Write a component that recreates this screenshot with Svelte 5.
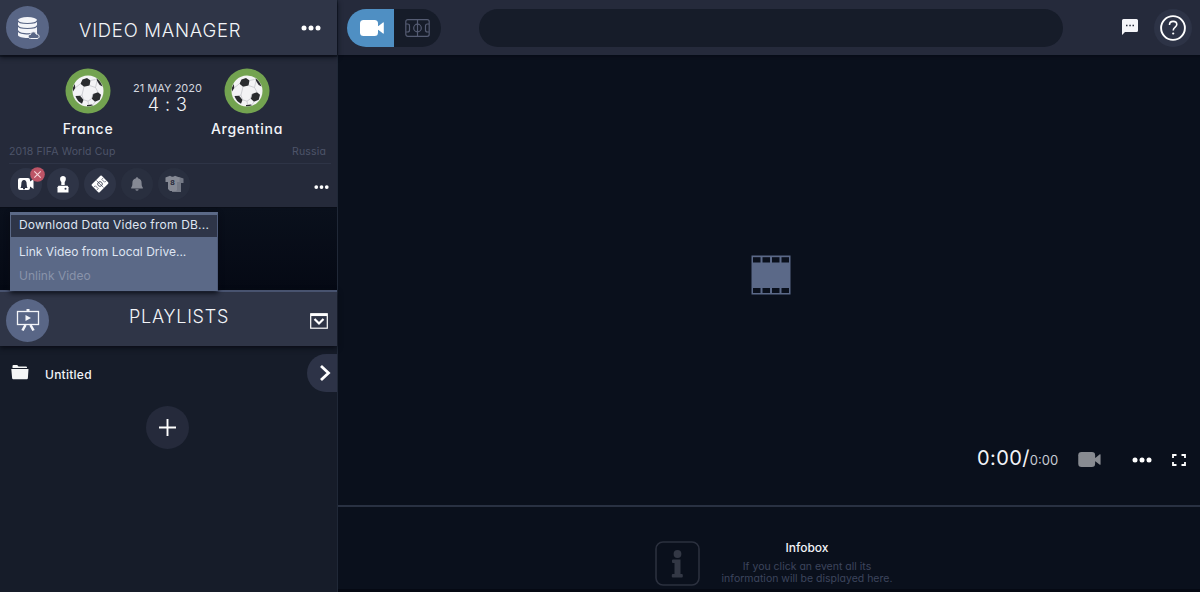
<script lang="ts">
    let mode = $state("video");
    let menuOpen = $state(true);

    const teams = ["France", "Argentina"];
    const menuItems = [
        { label: "Download Data Video from DB...", state: "active" },
        { label: "Link Video from Local Drive...", state: "" },
        { label: "Unlink Video", state: "disabled" },
    ];
</script>

{#snippet dots()}
    <svg class="dots" width="20" height="6" viewBox="0 0 20 6" fill="currentColor">
        <circle cx="3" cy="3" r="2.5" />
        <circle cx="10" cy="3" r="2.5" />
        <circle cx="17" cy="3" r="2.5" />
    </svg>
{/snippet}

{#snippet camera(w: number, h: number)}
    <svg width={w} height={h} viewBox="0 0 24 16" fill="currentColor">
        <rect width="18" height="16" rx="3.5" />
        <path d="M17 6.500l1.500-.5L23 2.500q.8-.5.8.5v10q0 1-.8.5L18.500 10 17 9.500z" />
    </svg>
{/snippet}

{#snippet ball()}
    <svg class="ball" width="46" height="46" viewBox="0 0 46 46">
        <circle cx="23" cy="23" r="22.500" fill="#73a350" />
        <circle cx="23" cy="23" r="15.500" fill="#f3f3f5" />
        <g fill="#2a2c2f">
            <path d="M17.500 11.500l4.500-1.500 3.500 2.500-1 5-5.500 1.200-3.500-3z" />
            <path d="M28 26l5-1.800 3 2.500-1.300 5-4.700 2-3.200-3z" />
            <path d="M10.500 28l4.500-.3 3.500 4-1.500 4q-5-2.500-6.500-7.700z" />
            <path d="M31.500 10.200q4.500 3.300 6 8.300l-2.800-1.500-2.700-4z" />
            <path d="M7.800 20l2-4 .5 4-2.300 3.500z" />
            <path d="M22 37l5-.4 1 .7q-3.500 1.400-6 .9z" />
        </g>
        <path
            d="M19 18.700L17 27l1.500 4.700M17 27l-2 .7M24.500 17.500l6 2 2.500 4.700M30.500 19.500l1.500-6.500M18.500 31.700l4.500 1.500 3.500-2.500 1.500-4.700M15.500 15.700L10 20M25.500 12.500l5-1M23 33.200l.5 3.500M30 33.700l-2 3"
            fill="none"
            stroke="#bfc0c5"
            stroke-width=".7"
        />
    </svg>
{/snippet}

<div class="app">
    <aside>
        <header class="bar">
            <div class="badge">
                <svg width="24" height="24" viewBox="0 0 24 24">
                    <path d="M2 4v15c0 4 19 4 19 0V4z" fill="#f4f5f9" />
                    <ellipse cx="11.500" cy="4" rx="9.500" ry="3" fill="#f4f5f9" />
                    <path d="M2 4.500c0 4 19 4 19 0M2 9.500c0 4 19 4 19 0M2 14.500c0 3.500 12 4 15 2.500" fill="none" stroke="#596686" stroke-width="1.200" />
                    <path d="M14.500 22.500c-3 0-3-4 0-4 1-4 5.500-3 5.500-.5 4 0 4 4.500 1 4.500z" fill="#596686" stroke="#f4f5f9" stroke-width="1" />
                </svg>
            </div>
            <h1>VIDEO MANAGER</h1>
            <button aria-label="More">{@render dots()}</button>
        </header>

        <section class="match">
            <div class="score">
                <div class="team">
                    {@render ball()}
                    <span class="name">{teams[0]}</span>
                </div>
                <div class="result">
                    <span class="date">21 MAY 2020</span>
                    <span class="goals">4 : 3</span>
                </div>
                <div class="team">
                    {@render ball()}
                    <span class="name">{teams[1]}</span>
                </div>
            </div>
            <div class="place">
                <span>2018 FIFA World Cup</span>
                <span>Russia</span>
            </div>
            <div class="tools">
                <button class="tool" aria-label="Video" onclick={() => (menuOpen = !menuOpen)}>
                    <svg width="18" height="14" viewBox="0 0 18 14">
                        <path d="M3 1h8q2 0 2 2v1.500l3.500-2.300V12L13 9.500V11q0 2-2 2H3q-2 0-2-2V3q0-2 2-2z" fill="#fff" />
                        <path d="M3.300 11q1-1 1-3.500 0-4.500 2.700-4.500T9.700 7.500q0 2.500 1 3.500zM6 11h2v1.200H6z" fill="#2d3345" />
                    </svg>
                    <svg class="cross" width="15" height="15" viewBox="0 0 15 15">
                        <circle cx="7.500" cy="7.500" r="7.300" fill="#bd5466" />
                        <path d="M4.300 4.300l6.400 6.400M10.700 4.300l-6.400 6.400" stroke="#f6d6da" stroke-width="1.100" />
                    </svg>
                </button>
                <button class="tool" aria-label="Speaker">
                    <svg width="12" height="17" viewBox="0 0 12 17" fill="#fff">
                        <path d="M6 0c3.500 0 3.500 4 1.700 6v3h-3.400V6C2.500 4 2.500 0 6 0z" />
                        <path d="M1.500 9.700h9l1 1.500v5.300H.5v-5.300z" />
                        <circle cx="8.500" cy="12.800" r="1" fill="#30364a" />
                    </svg>
                </button>
                <button class="tool" aria-label="Pitch">
                    <svg width="18" height="18" viewBox="0 0 18 18">
                        <g transform="rotate(-45 9 9)">
                            <rect x="2" y="3.500" width="14" height="11" rx="1" fill="#fff" />
                            <path d="M9 4v10M2.500 7h2v4h-2M15.500 7h-2v4h2" fill="none" stroke="#30364a" stroke-width=".6" />
                            <circle cx="9" cy="9" r="2.300" fill="none" stroke="#30364a" stroke-width=".8" />
                        </g>
                    </svg>
                </button>
                <button class="tool off" aria-label="Alerts">
                    <svg width="12" height="14" viewBox="0 0 12 14" fill="#858994">
                        <path d="M6 .3c.8 0 1 .5 1 1 2.800.5 3.600 2.500 3.600 4.700 0 3 .5 3.500 1.200 4.500v1H.2v-1C.9 9.500 1.400 9 1.400 6c0-2.200.9-4.200 3.600-4.700 0-.5.200-1 1-1zM4.300 12.200h3.400q-.3 1.500-1.700 1.500t-1.700-1.500z" />
                    </svg>
                </button>
                <button class="tool off" aria-label="Line-up">
                    <svg width="19" height="18" viewBox="0 0 19 18">
                        <path d="M8 2h3l1 1 2-1 4.500 1.500V8H16v9H7z" fill="#747985" />
                        <path d="M.5 2.500L5 .8q2.500 2 5 0l4.500 1.700V7H12v8l-1 1H5l-2-2V7H.5z" fill="#858994" />
                        <text x="7.500" y="9.500" text-anchor="middle" font-size="8" font-weight="700" fill="#252a3a">8</text>
                    </svg>
                </button>
                <button class="more" aria-label="More tools">{@render dots()}</button>
            </div>
        </section>

        <div class="gap">
            {#if menuOpen}
                <ul class="menu">
                    {#each menuItems as item}
                        <li class={item.state}>{item.label}</li>
                    {/each}
                </ul>
            {/if}
        </div>

        <header class="bar playlists">
            <div class="badge">
                <svg width="24" height="24" viewBox="0 0 24 24" fill="none" stroke="#f4f5f9">
                    <rect x="1.500" y="3.500" width="21" height="13" stroke-width="1.300" />
                    <path d="M10.500 2h3" stroke-width="2" />
                    <path d="M9.500 17l-3 5.500M14.500 17l3 5.500" stroke-width="2.600" />
                    <path d="M9.500 7l5.500 3-5.500 3z" fill="#f4f5f9" stroke="none" />
                </svg>
            </div>
            <h2>PLAYLISTS</h2>
            <button class="fold" aria-label="Collapse">
                <svg width="18" height="16" viewBox="0 0 18 16" fill="none" stroke="#fff">
                    <rect x=".7" y=".8" width="16.600" height="14.400" stroke-width="1.200" />
                    <path d="M1 1.800h16" stroke-width="2.500" />
                    <path d="M4.500 6L9 10.500 13.500 6" stroke-width="2.200" />
                </svg>
            </button>
        </header>

        <section class="lists">
            <div class="row">
                <svg width="18" height="15" viewBox="0 0 18 15" fill="#f4f5f5">
                    <path d="M1.500 3V1q0-1 1-1h3.700l1.300 1.500H15q1 0 1 1V3z" />
                    <path d="M.3 4h17.200l-.6 9q-.1 1.300-1.200 1.300H2.300Q1.200 14.300 1.100 13z" />
                </svg>
                <span>Untitled</span>
                <button class="next" aria-label="Open">
                    <svg width="12" height="18" viewBox="0 0 12 18" fill="none" stroke="#fff" stroke-width="2.800">
                        <path d="M2 2l7.500 7L2 16" />
                    </svg>
                </button>
            </div>
            <button class="add" aria-label="Add playlist">
                <svg width="17" height="17" viewBox="0 0 17 17" stroke="#fff" stroke-width="1.900">
                    <path d="M8.500 0v17M0 8.500h17" />
                </svg>
            </button>
        </section>
    </aside>

    <main>
        <header class="top">
            <div class="switch">
                <button class:on={mode === "video"} aria-label="Video" onclick={() => (mode = "video")}>
                    {@render camera(24, 16)}
                </button>
                <button class:on={mode === "pitch"} aria-label="Pitch" onclick={() => (mode = "pitch")}>
                    <svg width="25" height="18" viewBox="0 0 25 18" fill="none" stroke="currentColor" stroke-width="1.200">
                        <rect x=".8" y=".7" width="23.400" height="16.600" rx="2" />
                        <path d="M12.500 1v16M1 5h1.500q2 0 2 2v4q0 2-2 2H1M24 5h-1.500q-2 0-2 2v4q0 2 2 2H24" />
                        <circle cx="12.500" cy="9" r="3.800" />
                    </svg>
                </button>
            </div>
            <div class="search"></div>
            <button class="chat" aria-label="Messages">
                <svg width="16" height="16" viewBox="0 0 16 16">
                    <path d="M1.500 0h13Q16 0 16 1.500v10q0 1.500-1.500 1.500H3l-3 3V1.500Q0 0 1.500 0z" fill="#f5f5f9" />
                    <path d="M4 6.500h1.500M7.300 6.500h1.500M10.500 6.500H12" stroke="#252a3b" stroke-width="1.500" />
                </svg>
            </button>
            <button class="help" aria-label="Help">
                <svg width="28" height="28" viewBox="0 0 28 28" fill="none" stroke="#fff">
                    <circle cx="14" cy="14" r="11.900" stroke-width="1.900" />
                    <path d="M10.500 11c0-5 7.300-4.500 7.300-.5 0 2.700-3.600 2.500-3.600 6" stroke-width="1.600" />
                    <circle cx="14.200" cy="19.500" r="1.100" fill="#fff" stroke="none" />
                </svg>
            </button>
        </header>

        <section class="stage">
            <div class="empty">
                <svg width="40" height="40" viewBox="0 0 40 40">
                    <rect x=".5" y=".5" width="39" height="39" fill="#5b6988" />
                    <g fill="#0a101c">
                        {#each [0, 1, 2, 3] as i}
                            <rect x={2 + i * 9.500} y="2.200" width="7.500" height="5.300" />
                            <rect x={2 + i * 9.500} y="33" width="7.500" height="5" />
                        {/each}
                    </g>
                </svg>
            </div>
            <div class="controls">
                <span class="time">0:00/</span><span class="total">0:00</span>
                <button class="cam" aria-label="Camera">{@render camera(23, 15)}</button>
                <button class="opts" aria-label="Options">{@render dots()}</button>
                <button class="full" aria-label="Fullscreen">
                    <svg width="14" height="12" viewBox="0 0 14 12" fill="none" stroke="#fff" stroke-width="1.800">
                        <path d="M1 4V1h3.500M9.500 1H13v3M13 8v3H9.500M4.500 11H1V8" />
                    </svg>
                </button>
            </div>
        </section>

        <footer>
            <svg width="45" height="45" viewBox="0 0 45 45">
                <rect x="1" y="1" width="43" height="43" rx="7" fill="none" stroke="#2b303e" stroke-width="1.600" />
                <g fill="#333845">
                    <circle cx="22.500" cy="13" r="3.900" />
                    <path d="M18 18.500h7.500V33h1.300q1 0 1 1v1.500q0 1-1 1h-9q-1 0-1-1V34q0-1 1-1h1.700V22h-1.500q-1 0-1-1v-1.500q0-1 1-1z" />
                </g>
            </svg>
            <div class="info">
                <strong>Infobox</strong>
                <p>If you click an event all its<br />information will be displayed here.</p>
            </div>
        </footer>
    </main>
</div>

<style>
    :global(body) {
        background: #0a101c;
    }
    .app {
        display: flex;
        height: 592px;
        color: #f2f4f8;
        font-family: Inter, "Open Sans", sans-serif;
        font-feature-settings: "cv11", "ss03";
        overflow: hidden;
        white-space: nowrap;
    }
    button {
        display: flex;
        align-items: center;
        justify-content: center;
        padding: 0;
        border: none;
        background: none;
        color: #fff;
        cursor: pointer;
    }
    svg {
        display: block;
        flex: none;
    }
    aside {
        box-sizing: border-box;
        width: 338px;
        flex: none;
        display: flex;
        flex-direction: column;
        border-right: 1px solid #202837;
        background: #161c29;
    }
    .bar {
        box-sizing: border-box;
        height: 55px;
        flex: none;
        display: grid;
        grid-template-columns: 49px 1fr 52px;
        align-items: center;
        padding-left: 6px;
        background: #2f3547;
        position: relative;
        box-shadow: 0 2px 5px #090c15;
    }
    .badge {
        width: 43px;
        height: 43px;
        display: grid;
        place-items: center;
        border-radius: 50%;
        background: #596686;
    }
    h1,
    h2 {
        margin: 0;
        font-size: 18px;
        font-weight: 300;
        line-height: 22px;
    }
    h1 {
        padding: 4px 0 0 24px;
        font-size: 18.500px;
        letter-spacing: 0.75px;
    }
    h2 {
        padding: 0 0 5px 74px;
        letter-spacing: 0.75px;
    }
    .match {
        height: 150px;
        flex: none;
        margin-top: 2px;
        background: #252a3a;
        border-bottom: 1px solid #090d17;
    }
    .score {
        display: grid;
        grid-template-columns: 118px 41px 118px;
        padding: 11px 0 0 29px;
        height: 75px;
    }
    .team,
    .result {
        display: flex;
        flex-direction: column;
        align-items: center;
    }
    .name {
        margin-top: 5px;
        font-size: 14px;
        font-weight: 500;
        line-height: 19px;
        letter-spacing: 0.7px;
    }
    .date {
        margin-top: 12px;
        font-size: 11px;
        line-height: 16px;
        color: #d3d6df;
    }
    .goals {
        font-size: 18px;
        line-height: 18px;
        font-weight: 300;
        letter-spacing: 0.4px;
    }
    .place {
        display: flex;
        justify-content: space-between;
        margin: 0 6px 0 9px;
        padding: 2px 5px 4px 0;
        border-bottom: 1px solid #2e3446;
        font-size: 10.5px;
        line-height: 14px;
        letter-spacing: 0.15px;
        color: #4d5469;
    }
    .tools {
        display: flex;
        align-items: center;
        gap: 5px;
        padding: 4px 8px 0 10px;
    }
    .tool {
        position: relative;
        width: 32px;
        height: 32px;
        border-radius: 50%;
        background: #2e3446;
    }
    .off {
        background: #292f3f;
    }
    .cross {
        position: absolute;
        top: -1px;
        right: -3px;
    }
    .more {
        margin: 6px 0 0 auto;
    }
    .more :global(svg) {
        width: 15px;
    }
    .gap {
        height: 82px;
        flex: none;
        position: relative;
        background: linear-gradient(#0a101c, #050914);
    }
    .menu {
        box-sizing: border-box;
        position: absolute;
        z-index: 2;
        top: 4px;
        left: 10px;
        width: 208px;
        height: 79px;
        margin: 0;
        padding: 0;
        border: 1px solid #5b6987;
        border-top-width: 3px;
        border-right-color: #4f5c7a;
        background: #5b6987;
        box-shadow: 0 2px 5px #080b14;
        list-style: none;
        font-size: 12px;
        color: #dfe5f2;
    }
    .menu li {
        height: 24px;
        line-height: 25px;
        padding-left: 8px;
    }
    .menu .active {
        height: 22px;
        line-height: 20px;
        margin-bottom: 2px;
        background: #2e3548;
        letter-spacing: 0.2px;
    }
    .menu .disabled {
        color: #8993aa;
    }
    .playlists {
        height: 56px;
        border-top: 2px solid #48536f;
    }
    .playlists .badge {
        margin-top: 2px;
    }
    .fold {
        padding: 3px 0 0 16px;
    }
    .lists {
        flex: 1;
        padding-top: 8px;
    }
    .row {
        display: flex;
        align-items: center;
        height: 38px;
        padding-left: 11px;
        font-size: 12px;
        font-weight: 500;
        letter-spacing: 0.25px;
    }
    .row > svg {
        margin-bottom: 2px;
    }
    .row span {
        padding: 2px 0 0 16px;
    }
    .next {
        width: 30px;
        height: 38px;
        margin-left: auto;
        padding-left: 5px;
        border-radius: 19px 0 0 19px;
        background: #2d3347;
    }
    .add {
        width: 43px;
        height: 43px;
        margin: 14px 0 0 146px;
        border-radius: 50%;
        background: #252a3b;
    }
    main {
        flex: 1;
        display: flex;
        flex-direction: column;
        background: #0a101c;
    }
    .top {
        box-sizing: border-box;
        height: 55px;
        flex: none;
        display: flex;
        align-items: center;
        padding: 0 9px;
        background: #252a3b;
        box-shadow: 0 1px 3px #060a15;
    }
    .switch {
        display: flex;
        height: 38px;
        border-radius: 19px;
        overflow: hidden;
        background: #161c29;
    }
    .switch button {
        width: 47px;
        color: #555c73;
    }
    .switch .on {
        padding-left: 2px;
        box-sizing: border-box;
        background: #4f8fc3;
        color: #fff;
    }
    .search {
        width: 584px;
        height: 38px;
        margin-left: 38px;
        border-radius: 19px;
        background: #161c29;
    }
    .chat {
        margin-left: 59px;
    }
    .chat svg {
        margin-top: -1px;
    }
    .help {
        width: 38px;
        height: 38px;
        margin-left: 16px;
        border-radius: 50%;
        background: #2d3346;
    }
    .stage {
        height: 450px;
        flex: none;
        display: flex;
        flex-direction: column;
        border-bottom: 2px solid #293142;
    }
    .empty {
        padding: 200px 0 0 412.500px;
        height: 184px;
    }
    .controls {
        display: flex;
        align-items: center;
        height: 40px;
        padding-left: 639px;
    }
    .time {
        font-size: 20px;
        letter-spacing: 0.4px;
        padding-bottom: 3px;
    }
    .total {
        font-size: 13px;
        color: #c8cbd3;
        padding-top: 1px;
    }
    .cam {
        margin-left: 20px;
        color: #888b91;
    }
    .opts {
        margin: 1px 0 0 31px;
    }
    .full {
        margin: 1px 0 0 20px;
    }
    footer {
        flex: 1;
        display: flex;
        padding: 34px 0 0 317px;
        border-bottom: 3px solid #050913;
    }
    .info {
        width: 172px;
        margin-left: 21px;
        text-align: center;
    }
    .info strong {
        display: block;
        font-size: 12px;
        font-weight: 500;
        line-height: 14px;
    }
    .info p {
        margin: 6px -5px 0;
        font-size: 10.5px;
        line-height: 12px;
        color: #3d455c;
    }
</style>
